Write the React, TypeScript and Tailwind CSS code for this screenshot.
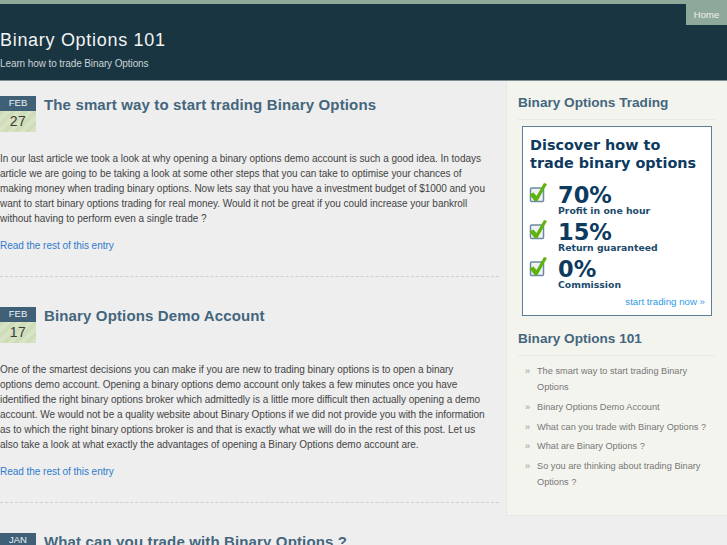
const font = "[font-family:'Liberation_Sans',Arial,sans-serif]";

function Check() {
  return (
    <svg width="19" height="21" viewBox="0 0 19 21" className="shrink-0">
      <rect x="1.5" y="6" width="13" height="13.5" rx="1" fill="#eef2f5" stroke="#6d8aa3" strokeWidth="1.5" />
      <path d="M0.5 12.5 L4.5 10.5 L7.5 14 L15 1 L18 2 L8.5 19 L5.5 19 Z" fill="#5fb30d" />
    </svg>
  );
}

function Post({ month, day, title, children }: { month: string; day: string; title: string; children?: React.ReactNode }) {
  return (
    <article className="pb-[23px] border-b border-dashed border-[#cfcfcf] mb-[30px] last:border-0">
      <div className="flex">
        <div className="w-[36px] shrink-0">
          <div className="h-[15px] bg-[#3f6076] text-[#eef2f5] text-[9.5px] leading-[14px] text-center">{month}</div>
          <div className="h-[21px] bg-[repeating-linear-gradient(135deg,#cfdcb8_0px,#cfdcb8_4px,#d8e3c6_4px,#d8e3c6_8px)] text-[#3c3c3c] text-[14px] leading-[20px] text-center tracking-[0.5px]">{day}</div>
        </div>
        <h2 className="ml-2 text-[15px] leading-[18px] font-bold text-[#44667d] tracking-[0.14px]">{title}</h2>
      </div>
      {children}
    </article>
  );
}

function Body({ children }: { children: React.ReactNode }) {
  return (
    <>
      <p className="w-[486px] mt-[19px] text-[10px] leading-[15px] text-[#444444] tracking-[-0.03px]">{children}</p>
      <a className="block mt-[12px] text-[10px] leading-[15px] text-[#2f7bcb] tracking-[-0.03px]">Read the rest of this entry</a>
    </>
  );
}

const links = [
  "The smart way to start trading Binary Options",
  "Binary Options Demo Account",
  "What can you trade with Binary Options ?",
  "What are Binary Options ?",
  "So you are thinking about trading Binary Options ?",
];

function Stat({ value, label }: { value: string; label: string }) {
  return (
    <div className="flex gap-[10px] mb-[3px]">
      <div className="-ml-[1px]"><Check /></div>
      <div>
        <div className="mt-[3px] text-[22.5px] leading-[20px] font-bold text-[#0d3a5e] [font-family:'DejaVu_Sans',sans-serif]">{value}</div>
        <div className="mt-[1px] text-[9.3px] leading-[10px] font-bold text-[#1c4a6c] [font-family:'DejaVu_Sans',sans-serif]">{label}</div>
      </div>
    </div>
  );
}

export default function App() {
  return (
    <div className={`${font} w-[727px] h-[545px] overflow-hidden bg-[#eeeeee]`}>
      <div className="h-[4px] bg-[#8ea899]" />
      <header className="h-[77px] bg-[#1a3542] border-b border-[#7f9092] flex justify-between">
        <div>
          <h1 className="mt-[25px] text-[18px] leading-[22px] font-normal text-[#f2f4f4] tracking-[0.7px]">Binary Options 101</h1>
          <p className="mt-[6px] text-[10px] leading-[14px] text-[#c9d3d6] tracking-[-0.1px]">Learn how to trade Binary Options</p>
        </div>
        <nav className="w-[41px] h-[21px] bg-[#8ea899] text-[#f0f3f0] text-[9.5px] leading-[21px] text-center">Home</nav>
      </header>
      <div className="flex">
        <main className="w-[499px] pt-[15px] shrink-0">
          <Post month="FEB" day="27" title="The smart way to start trading Binary Options">
            <Body>
              In our last article we took a look at why opening a binary options demo account is such a good idea. In todays article we are going to be taking a look at some other steps that you can take to optimise your chances of making money when trading binary options. Now lets say that you have a investment budget of $1000 and you want to start binary options trading for real money. Would it not be great if you could increase your bankroll without having to perform even a single trade ?
            </Body>
          </Post>
          <Post month="FEB" day="17" title="Binary Options Demo Account">
            <Body>
              One of the smartest decisions you can make if you are new to trading binary options is to open a binary options demo account. Opening a binary options demo account only takes a few minutes once you have identified the right binary options broker which admittedly is a little more difficult then actually opening a demo account. We would not be a quality website about Binary Options if we did not provide you with the information as to which the right binary options broker is and that is exactly what we will do in the rest of this post. Let us also take a look at what exactly the advantages of opening a Binary Options demo account are.
            </Body>
          </Post>
          <Post month="JAN" day="" title="What can you trade with Binary Options ?" />
        </main>
        <aside className="ml-[7px] w-[221px] h-[435px] bg-[#f3f4ee] border-b border-l border-[#e6e6e2] pl-[11px] pt-[13px]">
          <h3 className="text-[13.6px] leading-[18px] font-bold text-[#44667d] pb-[7px] mb-[6px] border-b border-[#e8e8e3] w-[197px]">Binary Options Trading</h3>
          <div className="w-[190px] h-[190px] ml-[4px] bg-white border border-[#5f7f98] pl-[7px] pt-[9px]">
            <div className="text-[14.4px] leading-[18px] font-bold text-[#0d3a5e] [font-family:'DejaVu_Sans',sans-serif] mb-[10px]">Discover how to<br />trade binary options</div>
            <Stat value="70%" label="Profit in one hour" />
            <Stat value="15%" label="Return guaranteed" />
            <Stat value="0%" label="Commission" />
            <div className="text-[9.7px] leading-[11px] text-[#2f9be6] text-right pr-[6px] mt-[6px]">start trading now »</div>
          </div>
          <h3 className="mt-[14px] text-[13.6px] leading-[18px] font-bold text-[#44667d] pb-[7px] mb-[7px] border-b border-[#e8e8e3] w-[197px]">Binary Options 101</h3>
          <ul>
            {links.map((l) => (
              <li key={l} className="relative pl-[19px] w-[193px] text-[9.2px] leading-[16px] pb-[3.8px] text-[#777777]">
                <span className="absolute left-[7px] text-[#999999]">»</span>
                {l}
              </li>
            ))}
          </ul>
        </aside>
      </div>
    </div>
  );
}
